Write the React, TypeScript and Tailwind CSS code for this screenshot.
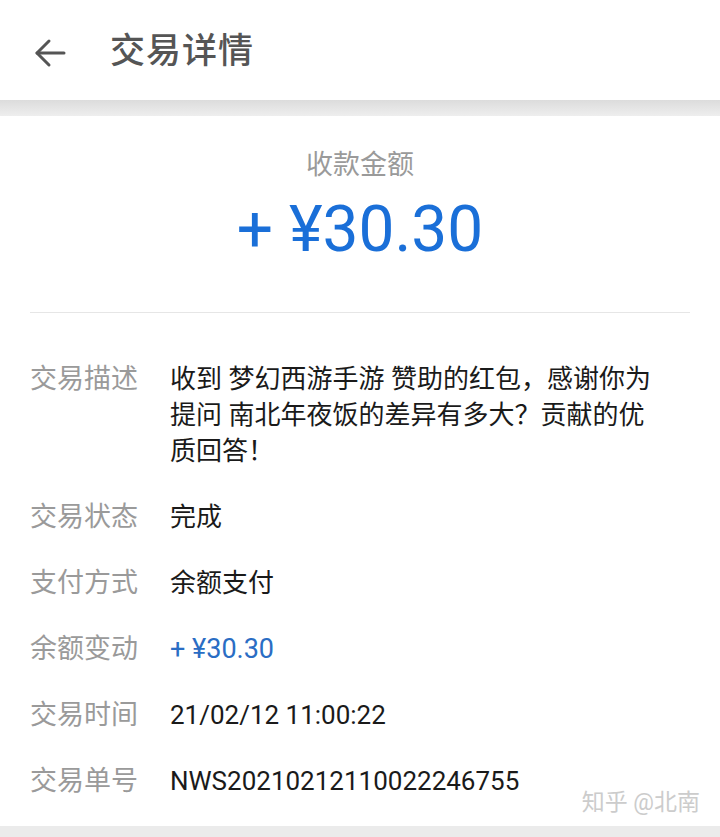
import React from 'react';

const rows: { label: string; value: React.ReactNode; blue?: boolean }[] = [
  { label: '交易状态', value: '完成' },
  { label: '支付方式', value: '余额支付' },
  { label: '余额变动', value: '+ ¥30.30', blue: true },
  { label: '交易时间', value: '21/02/12 11:00:22' },
  { label: '交易单号', value: 'NWS20210212110022246755' },
];

const Row: React.FC<{ label: string; blue?: boolean; children: React.ReactNode }> = ({ label, blue, children }) => (
  <div className="flex">
    <div className="w-[140px] shrink-0 text-[27px] leading-[36px] text-[#9a9a9a]">{label}</div>
    <div className={`flex-1 leading-[36px] ${blue ? 'text-[27px] text-[#2a6dc4]' : 'text-[26px] text-[#1a1a1a]'}`}>
      {children}
    </div>
  </div>
);

export default function App() {
  return (
    <div
      className="relative w-[720px] h-[837px] bg-[#ebebeb] overflow-hidden"
      style={{ fontFamily: 'Roboto, "Noto Sans CJK SC", sans-serif' }}
    >
      {/* Top bar */}
      <div className="h-[100px] bg-white flex items-center pl-[34px] pt-[5px]">
        <svg width="32" height="32" viewBox="0 0 32 32" fill="none" stroke="#555" strokeWidth="3" strokeLinecap="round" strokeLinejoin="round">
          <path d="M30 16H3" />
          <path d="M15 4L3 16l12 12" />
        </svg>
        <h1 className="ml-[44px] text-[35px] font-medium text-[#555] tracking-[1px]">交易详情</h1>
      </div>
      <div className="h-[16px] bg-gradient-to-b from-[#dcdcdc] to-[#eeeeee]" />

      {/* Card */}
      <div className="bg-white h-[710px] px-[30px]">
        <div className="flex flex-col items-center pt-[31px]">
          <div className="text-[27px] leading-[36px] text-[#9a9a9a]">收款金额</div>
          <div className="mt-[12px] text-[64px] leading-[70px] text-[#1a6fd8]">+ ¥30.30</div>
        </div>
        <div className="mt-[47px] h-px bg-[#e6e6e6]" />

        <div className="pt-[48px] flex flex-col gap-[30px]">
          <Row label="交易描述">
            收到 梦幻西游手游 赞助的红包，感谢你为<br />
            提问 南北年夜饭的差异有多大？贡献的优<br />
            质回答！
          </Row>
          {rows.map((r) => (
            <Row key={r.label} label={r.label} blue={r.blue}>
              {r.value}
            </Row>
          ))}
        </div>
      </div>

      {/* Watermark */}
      <div className="absolute right-[20px] top-[786px] text-[23px] text-[#cccccc]">知乎 @北南</div>
    </div>
  );
}
